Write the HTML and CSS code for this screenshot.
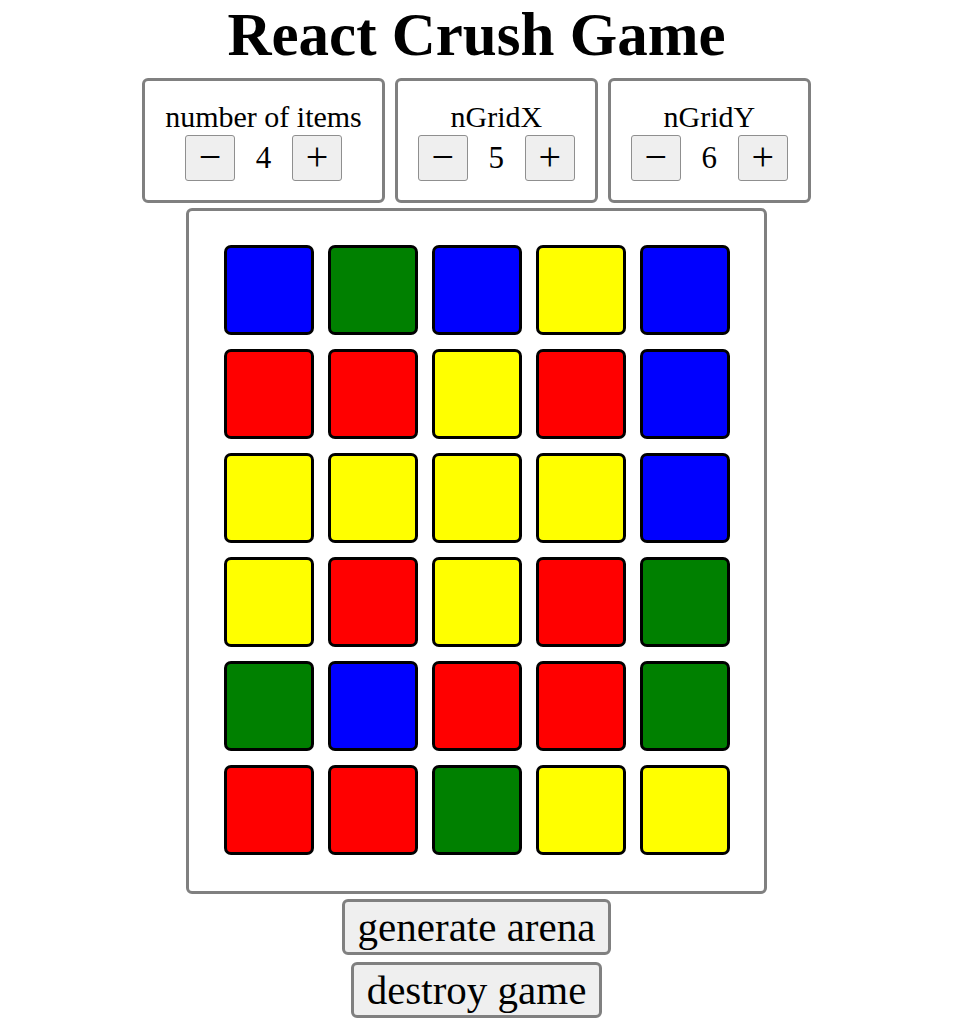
FILE: index.html
```html
<!DOCTYPE html>
<html>
<head>
<meta charset="utf-8">
<link rel="stylesheet" href="styles.css">
</head>
<body>
<div class="app">
  <h1 class="title">React Crush Game</h1>
  <div class="controls">
    <div class="control-box">
      <div class="control-label">number of items</div>
      <div class="stepper">
        <button class="step-btn">−</button>
        <span class="step-value">4</span>
        <button class="step-btn">+</button>
      </div>
    </div>
    <div class="control-box">
      <div class="control-label">nGridX</div>
      <div class="stepper">
        <button class="step-btn">−</button>
        <span class="step-value">5</span>
        <button class="step-btn">+</button>
      </div>
    </div>
    <div class="control-box">
      <div class="control-label">nGridY</div>
      <div class="stepper">
        <button class="step-btn">−</button>
        <span class="step-value">6</span>
        <button class="step-btn">+</button>
      </div>
    </div>
  </div>
  <div class="arena">
    <div class="grid">
      <div class="tile blue"></div><div class="tile green"></div><div class="tile blue"></div><div class="tile yellow"></div><div class="tile blue"></div>
      <div class="tile red"></div><div class="tile red"></div><div class="tile yellow"></div><div class="tile red"></div><div class="tile blue"></div>
      <div class="tile yellow"></div><div class="tile yellow"></div><div class="tile yellow"></div><div class="tile yellow"></div><div class="tile blue"></div>
      <div class="tile yellow"></div><div class="tile red"></div><div class="tile yellow"></div><div class="tile red"></div><div class="tile green"></div>
      <div class="tile green"></div><div class="tile blue"></div><div class="tile red"></div><div class="tile red"></div><div class="tile green"></div>
      <div class="tile red"></div><div class="tile red"></div><div class="tile green"></div><div class="tile yellow"></div><div class="tile yellow"></div>
    </div>
  </div>
  <div class="actions">
    <button class="action-btn">generate arena</button>
    <button class="action-btn">destroy game</button>
  </div>
</div>
</body>
</html>
```

FILE: styles.css
```css
html, body {
  margin: 0;
  padding: 0;
  background: #ffffff;
}
body {
  font-family: "Liberation Serif", "Times New Roman", serif;
  color: #000;
}
.app {
  display: flex;
  flex-direction: column;
  align-items: center;
}
.title {
  margin: 0;
  font-size: 61px;
  font-weight: bold;
  line-height: 70px;
  margin-bottom: 8px;
  text-align: center;
}
.controls {
  display: flex;
  gap: 10px;
  justify-content: center;
}
.control-box {
  border: 3px solid #808080;
  border-radius: 6px;
  padding: 20px 20px 19px 20px;
  display: flex;
  flex-direction: column;
  align-items: center;
}
.control-label {
  font-size: 30px;
  line-height: 31px;
  margin-bottom: 3px;
}
.stepper {
  display: flex;
  align-items: center;
}
.step-btn {
  width: 50px;
  height: 46px;
  padding: 0 0 3px 0;
  font-family: "Liberation Serif", serif;
  font-size: 40px;
  line-height: 1;
  background: #efefef;
  border: 1px solid #8f8f8f;
  border-radius: 3px;
  color: #000;
}
.step-value {
  width: 57px;
  text-align: center;
  font-size: 31px;
}
.arena {
  margin-top: 5px;
  border: 3px solid #808080;
  border-radius: 6px;
  padding: 34px 34px 36px 35px;
}
.grid {
  display: grid;
  grid-template-columns: repeat(5, 90px);
  grid-auto-rows: 90px;
  gap: 14px;
}
.tile {
  box-sizing: border-box;
  border: 3px solid #000;
  border-radius: 7px;
}
.blue { background: #0000ff; }
.green { background: #008000; }
.red { background: #ff0000; }
.yellow { background: #ffff00; }
.actions {
  display: flex;
  flex-direction: column;
  align-items: center;
  gap: 7px;
  margin-top: 5px;
}
.action-btn {
  font-family: "Liberation Serif", serif;
  font-size: 41px;
  line-height: 48px;
  padding: 1px 13px;
  background: #efefef;
  border: 3px solid #808080;
  border-radius: 6px;
  color: #000;
}
```
